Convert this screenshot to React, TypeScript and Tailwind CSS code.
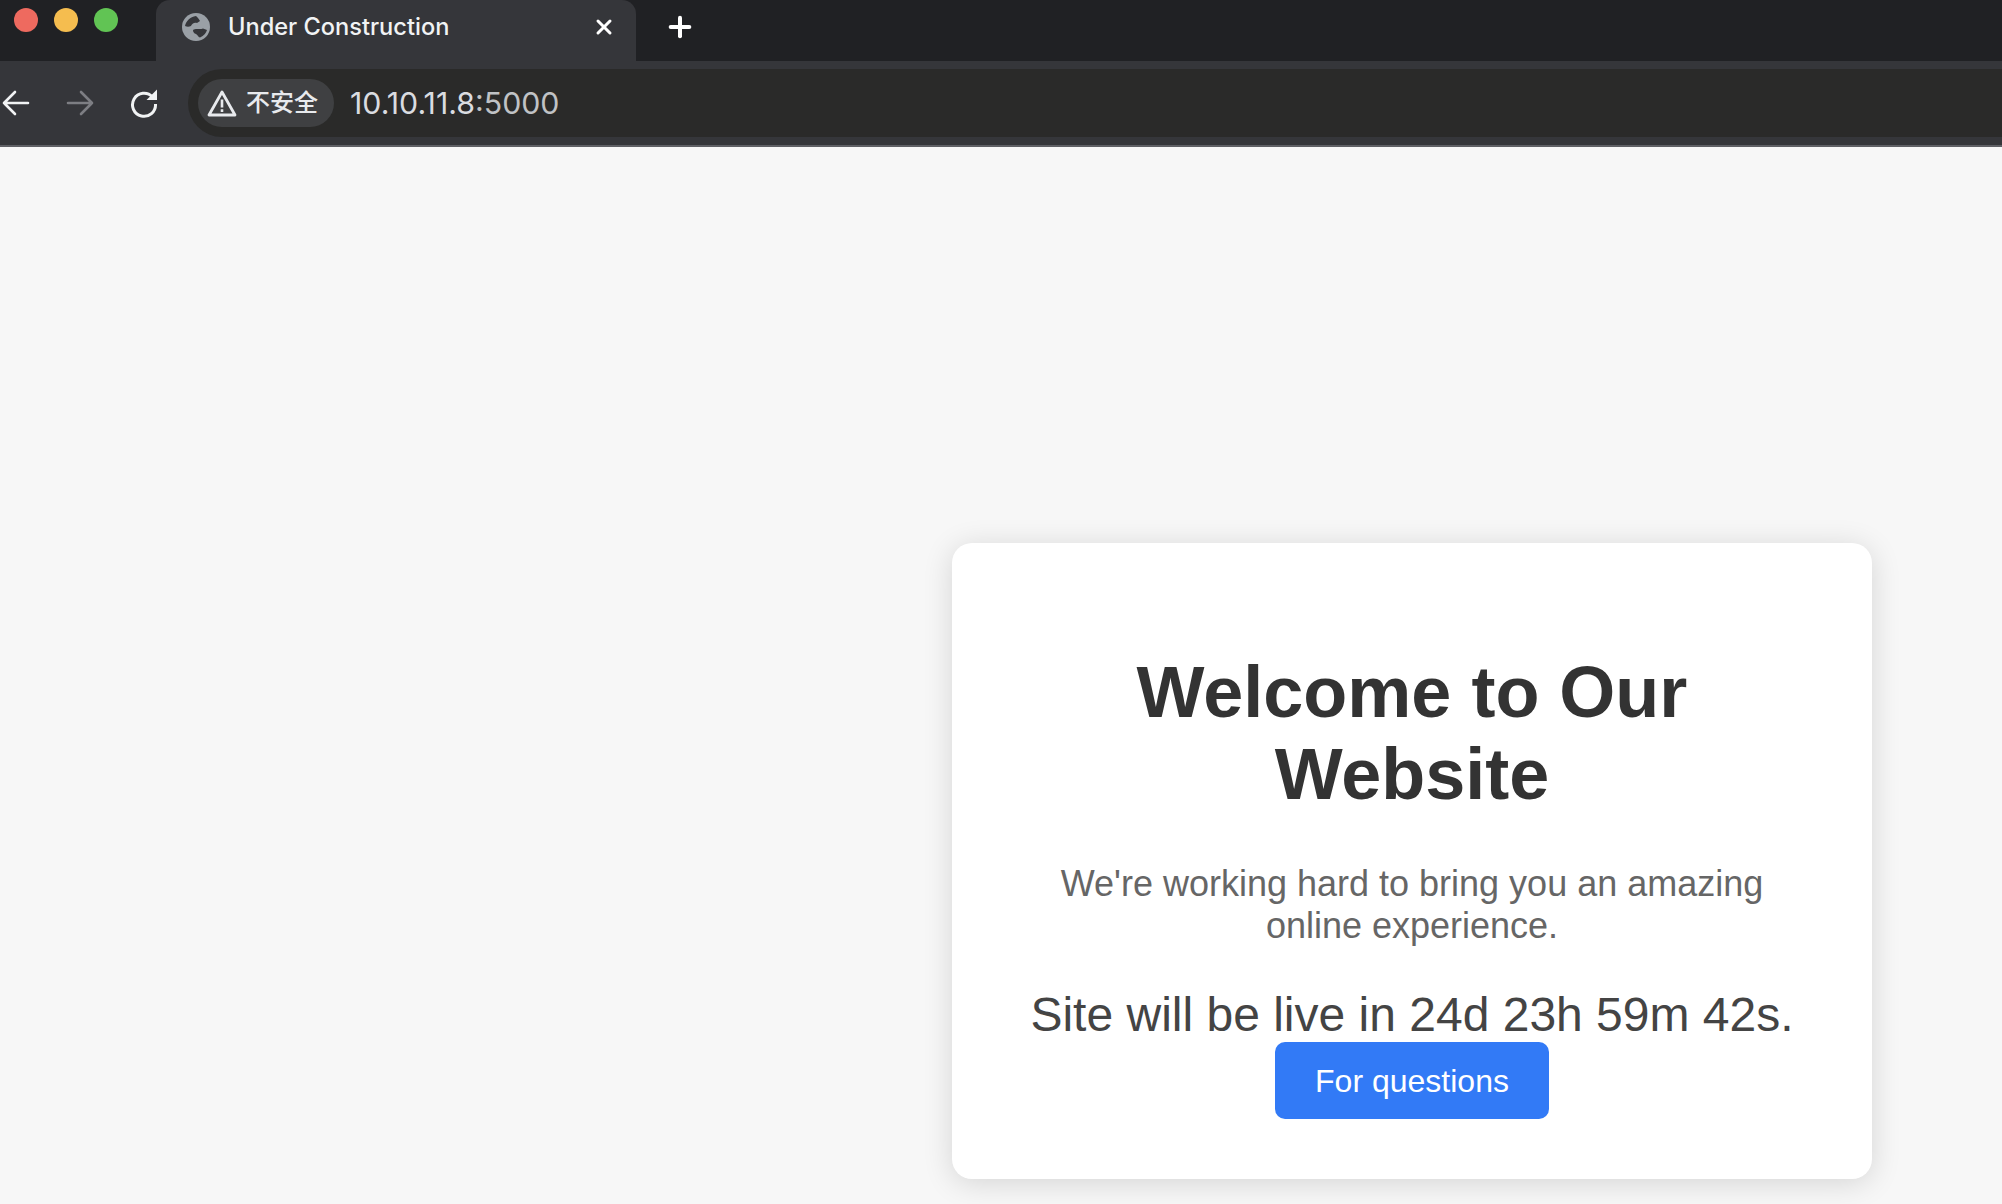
import { Plus, X } from 'lucide-react';

const chrome = '[font-family:Inter,Roboto,"Noto_Sans_CJK_SC",sans-serif]';

function GlobeIcon() {
  return (
    <svg viewBox="0 0 28 28" className="h-[28px] w-[28px] shrink-0">
      <circle cx="14" cy="14" r="14" fill="#9aa0a6" />
      <path d="M3 13C4 8 8 4 14 3c2 2 3 3 4 5l-3 2c-3-1-5 1-6 3-2 1-4 1-6 0z" fill="#35363a" />
      <path d="M11 17c3-2 7 0 10-1.500l4 1.500c-1 3-3 6-7 7.500-2-.5-2-2.500-4-3.500-2-.5-3-2-3-4z" fill="#35363a" />
    </svg>
  );
}

function BackIcon({ flip = false, color }: { flip?: boolean; color: string }) {
  return (
    <svg
      viewBox="0 0 30 30"
      fill="none"
      stroke={color}
      strokeWidth="2.600"
      strokeLinecap="round"
      strokeLinejoin="round"
      className={flip ? 'h-[30px] w-[30px] shrink-0 -scale-x-100' : 'h-[30px] w-[30px] shrink-0'}
    >
      <path d="M28 15H4M15 4 4 15l11 11" />
    </svg>
  );
}

function ReloadIcon() {
  return (
    <svg viewBox="0 0 30 30" fill="none" className="h-[30px] w-[30px] shrink-0">
      <path d="M23.500 9A11.500 11.500 0 1 0 26.500 16" stroke="#f1f3f4" strokeWidth="3" />
      <path d="M28 1.500V12H17.500z" fill="#f1f3f4" />
    </svg>
  );
}

function WarningIcon() {
  return (
    <svg viewBox="0 0 30 28" className="h-[28px] w-[30px] shrink-0">
      <path d="M15 3 28 26H2z" fill="none" stroke="#e8eaed" strokeWidth="2.800" strokeLinejoin="round" />
      <path d="M13.700 10.500h2.600v8h-2.600zM13.700 20.300h2.600v2.700h-2.600z" fill="#e8eaed" />
    </svg>
  );
}

function TabBar() {
  return (
    <div className="flex h-[61px] items-stretch bg-[#202124]">
      <div className="flex w-[156px] shrink-0 items-start gap-[16px] rounded-br-[14px] pl-[14px] pt-[8px]">
        <span className="h-[24px] w-[24px] rounded-full bg-[#ee6a5f]" />
        <span className="h-[24px] w-[24px] rounded-full bg-[#f5bd4f]" />
        <span className="h-[24px] w-[24px] rounded-full bg-[#61c454]" />
      </div>
      <div className="flex w-[480px] items-center rounded-t-[14px] bg-[#35363a] pl-[26px] pr-[20px] pb-[7px]">
        <GlobeIcon />
        <span className="ml-[18px] flex-1 text-[23.600px] font-medium leading-none text-[#f1f3f4]">Under Construction</span>
        <X size={24} strokeWidth={3} className="text-white" />
      </div>
      <div className="flex items-center pb-[7px] pl-[28px]">
        <Plus size={32} strokeWidth={3} className="text-white" />
      </div>
    </div>
  );
}

function Toolbar() {
  return (
    <div className="flex h-[86px] items-center border-b-[2px] border-[#5f6065] bg-[#35363a]">
      <div className="flex w-[188px] shrink-0 items-center">
        <BackIcon color="#f1f3f4" />
        <div className="ml-[36px]">
          <BackIcon flip color="#7d7e83" />
        </div>
        <div className="ml-[33px]">
          <ReloadIcon />
        </div>
      </div>
      <div className="flex h-[68px] flex-1 items-center rounded-l-[34px] bg-[#2a2a29] pl-[10px]">
        <div className="flex h-[48px] w-[136px] items-center rounded-[24px] bg-[#3f4042] pl-[9px]">
          <WarningIcon />
          <span className="ml-[9px] text-[24px] font-medium leading-none text-[#e8eaed]">不安全</span>
        </div>
        <span className="ml-[16px] text-[30.300px] leading-none text-[#dadce0]">
          10.10.11.8<span className="text-[#c0c2c5]">:5000</span>
        </span>
      </div>
    </div>
  );
}

export default function App() {
  return (
    <div className="flex h-[1204px] flex-col overflow-hidden bg-[#f7f7f7]">
      <div className={chrome}>
        <TabBar />
        <Toolbar />
      </div>
      <main className="flex flex-1 justify-end pr-[130px] pt-[396px] font-['Liberation_Sans',Arial,sans-serif]">
        <div className="flex h-[636px] w-[920px] flex-col items-center rounded-[20px] bg-white px-[50px] pt-[108px] text-center shadow-[0_4px_30px_rgba(0,0,0,0.14)]">
          <h1 className="text-[72px] font-bold leading-[82px] text-[#333333]">Welcome to Our Website</h1>
          <p className="mt-[48px] max-w-[720px] text-[36px] leading-[42px] text-[#666666]">We're working hard to bring you an amazing online experience.</p>
          <div className="mt-[43px] text-[48px] leading-[50px] text-[#444444]">Site will be live in 24d 23h 59m 42s.</div>
          <button className="mt-[2px] h-[77px] w-[274px] rounded-[10px] bg-[#327af6] text-[32px] text-white">For questions</button>
        </div>
      </main>
    </div>
  );
}
